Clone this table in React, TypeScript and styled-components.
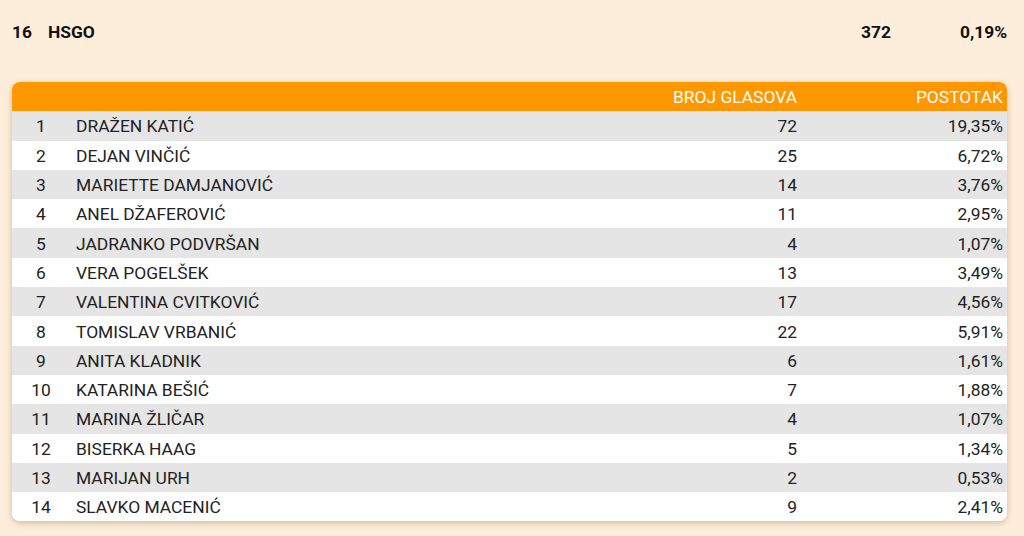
import React from "react";
import styled, { createGlobalStyle } from "styled-components";

const Global = createGlobalStyle`
  html, body { margin: 0; padding: 0; background: #fdeedb; }
  body { font-family: Roboto, "Liberation Sans", sans-serif; color: #222; }
`;

const Page = styled.div`
  width: 1024px;
  height: 536px;
  box-sizing: border-box;
  padding: 22px 17px 0 12px;
  background: #fdeedb;
  overflow: hidden;
`;

const Summary = styled.div`
  display: grid;
  grid-template-columns: 36px 1fr 100px 116px;
  align-items: center;
  height: 20px;
  font-weight: 700;
  font-size: 17.4px;
  color: #111;
`;

const SumCell = styled.div<{ $right?: boolean }>`
  text-align: ${(p) => (p.$right ? "right" : "left")};
`;

const Card = styled.div`
  margin-top: 40px;
  background: #fff;
  border-radius: 8px;
  overflow: hidden;
  box-shadow: 0 2px 6px rgba(120, 90, 50, 0.35);
`;

const Row = styled.div<{ $head?: boolean; $alt?: boolean }>`
  display: grid;
  grid-template-columns: 58px 1fr 200px 206px;
  align-items: center;
  height: 29.3px;
  padding-top: 1px;
  box-sizing: border-box;
  font-size: 17.4px;
  background: ${(p) => (p.$head ? "#ff9800" : p.$alt ? "#e5e5e5" : "#fff")};
  color: ${(p) => (p.$head ? "#fff" : "#222")};
`;

const Num = styled.div`
  text-align: center;
`;

const Name = styled.div`
  padding-left: 6px;
`;

const Right = styled.div<{ $pad?: number }>`
  text-align: right;
  padding-right: ${(p) => p.$pad ?? 0}px;
`;

const rows: [string, number, string][] = [
  ["DRAŽEN KATIĆ", 72, "19,35%"],
  ["DEJAN VINČIĆ", 25, "6,72%"],
  ["MARIETTE DAMJANOVIĆ", 14, "3,76%"],
  ["ANEL DŽAFEROVIĆ", 11, "2,95%"],
  ["JADRANKO PODVRŠAN", 4, "1,07%"],
  ["VERA POGELŠEK", 13, "3,49%"],
  ["VALENTINA CVITKOVIĆ", 17, "4,56%"],
  ["TOMISLAV VRBANIĆ", 22, "5,91%"],
  ["ANITA KLADNIK", 6, "1,61%"],
  ["KATARINA BEŠIĆ", 7, "1,88%"],
  ["MARINA ŽLIČAR", 4, "1,07%"],
  ["BISERKA HAAG", 5, "1,34%"],
  ["MARIJAN URH", 2, "0,53%"],
  ["SLAVKO MACENIĆ", 9, "2,41%"],
];

export default function App() {
  return (
    <Page>
      <Global />
      <Summary>
        <SumCell>16</SumCell>
        <SumCell>HSGO</SumCell>
        <SumCell $right>372</SumCell>
        <SumCell $right>0,19%</SumCell>
      </Summary>
      <Card>
        <Row $head>
          <Num />
          <Name />
          <Right $pad={4}>BROJ GLASOVA</Right>
          <Right $pad={4}>POSTOTAK</Right>
        </Row>
        {rows.map(([n, v, p], i) => (
          <Row key={n} $alt={i % 2 === 0}>
            <Num>{i + 1}</Num>
            <Name>{n}</Name>
            <Right $pad={4}>{v}</Right>
            <Right $pad={4}>{p}</Right>
          </Row>
        ))}
      </Card>
    </Page>
  );
}
